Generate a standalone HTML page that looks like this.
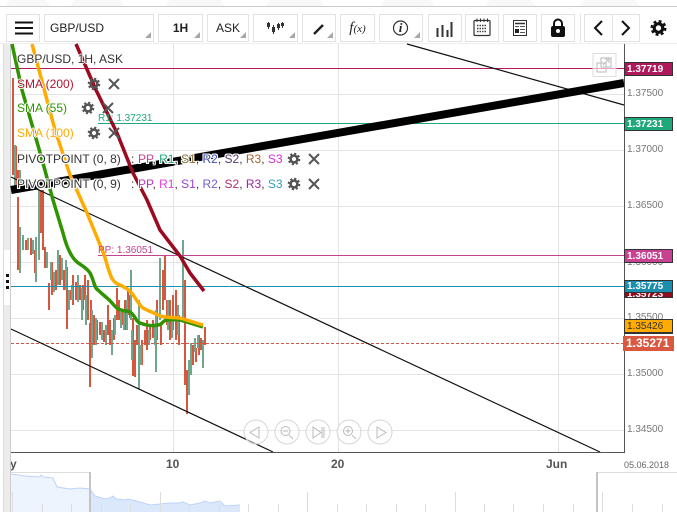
<!DOCTYPE html>
<html><head><meta charset="utf-8"><style>
html,body{margin:0;padding:0;background:#fff;width:677px;height:517px;overflow:hidden;font-family:"Liberation Sans",sans-serif}
svg{position:absolute;left:0;top:0}
.b{position:absolute;top:14px;height:26px;border:1px solid #e2e2e2;background:#fff;font-size:12px;color:#222;line-height:26px;text-align:center;box-sizing:content-box}
.c:after{content:"";position:absolute;right:2px;bottom:3px;border-left:6px solid transparent;border-bottom:6px solid #a8a8a8}
.l{position:absolute;font-size:12px;line-height:14px;white-space:nowrap;text-shadow:1px 0 0 #fff,-1px 0 0 #fff,0 1px 0 #fff,0 -1px 0 #fff}
.p{text-shadow:1px 0 0 #fff,-1px 0 0 #fff,0 1px 0 #fff,0 -1px 0 #fff,1px 1px 0 #fff,-1px -1px 0 #fff,1px -1px 0 #fff,-1px 1px 0 #fff}
.n{text-shadow:none}
.t{position:absolute;left:624px;width:49px;box-sizing:border-box;border:1px solid #333;font-size:10px;font-weight:bold;color:#fff;padding-left:2px;overflow:hidden;white-space:nowrap}
.a{position:absolute;left:627px;font-size:10px;color:#777;line-height:12px}
.x{position:absolute;font-size:12px;font-weight:bold;color:#555;line-height:14px}
</style></head><body>
<svg width="677" height="517" viewBox="0 0 677 517">
<defs>
<g id="g"><circle r="3.4" fill="none" stroke="#555" stroke-width="2.6"/><circle r="5.2" fill="none" stroke="#555" stroke-width="2.2" stroke-dasharray="2.1 1.98"/></g>
<path id="k" d="M-5 -5L5 5M5 -5L-5 5" stroke="#555" stroke-width="2" fill="none"/>
</defs>
<g fill="#f8f8f8"><path d="M10 0h35l6 6h-47zM75 0h45l5 6h-55zM170 0h50l5 6h-60zM270 0h50l5 6h-60zM385 0h45l6 6h-56zM490 0h40l6 6h-52zM585 0h50l6 6h-62z"/></g>
<rect x="0" y="6" width="677" height="1" fill="#ccc"/>
<rect x="4" y="44" width="6" height="468" fill="#ececec"/>
<rect x="4" y="250" width="6" height="55" fill="#fff"/>
<rect x="3" y="44" width="1" height="468" fill="#ddd"/>
<rect x="10" y="44" width="1" height="468" fill="#ccc"/>
<rect x="6" y="274" width="3" height="3" fill="#111"/><rect x="6" y="280" width="3" height="3" fill="#111"/><rect x="6" y="286" width="3" height="3" fill="#111"/>
<rect x="0" y="43" width="677" height="1" fill="#eee"/>
<g stroke="#e3e3e3" stroke-width="1" shape-rendering="crispEdges">
<path d="M11 94.5H624M11 150.5H624M11 206.5H624M11 262.5H624M11 318.5H624M11 374.5H624M11 430.5H624M173.5 44V452M338.5 44V452M558.5 44V452"/>
</g>
<!-- candles -->
<g fill="none" stroke-width="1.6" shape-rendering="crispEdges">
<path stroke="#d5573f" d="M13 78V175M16 146V186M18 170V186M18 197V270M26 240V250M31 238V255M35 250V273M41 190V233M43 190V250M45 247V268M49 283V310M52 262V295M56 270V290M60 255V285M64 270V290M67 267V329M70 290V300M73 275V305M76 282V300M80 285V300M83 285V310M85 275V300M88 280V320M90 323V387M91 300V340M94 315V345M97 320V340M100 322V335M104 330V342M108 305V335M110 320V345M114 318V340M117 288V320M119 300V320M122 310V325M125 300V330M128 290V315M130 295V318M133 318V376M135 340V377M137 325V345M142 340V365M145 330V345M147 320V350M150 325V340M153 320V338M157 300V340M161 325V345M163 270V310M165 255V300M167 300V325M170 300V340M173 295V330M176 290V340M179 315V345M185 280V385M187 370V414M193 345V365M196 348V362M199 335V355M201 338V350M205 327V345"/>
<path stroke="#70a68c" d="M15 145V186M20 170V186M20 227V273M23 235V250M28 238V250M33 240V254M36 237V282M39 190V260M47 252V268M51 262V280M54 272V292M58 250V285M62 258V280M66 260V290M69 290V310M72 285V300M78 275V302M82 288V320M86 295V325M92 310V358M96 318V345M102 322V340M106 325V345M112 330V355M115 315V335M121 312V328M124 310V330M127 300V330M131 270V320M132 330V360M139 300V389M141 345V365M149 330V345M155 325V345M156 310V372M160 258V320M168 300V330M172 320V338M178 305V335M183 240V320M189 360V395M191 343V375M195 338V352M198 335V348M203 340V368"/>
</g>
<!-- lines -->
<rect x="11" y="68" width="613" height="1" fill="#b5185f"/>
<rect x="98" y="123" width="526" height="1" fill="#1fa87a"/>
<rect x="98" y="255" width="526" height="1" fill="#c0448f"/>
<rect x="11" y="286" width="613" height="1" fill="#1a8faf"/>
<path d="M11 343.5H624" stroke="#d0564a" stroke-width="1" stroke-dasharray="3 2" fill="none"/>
<path d="M407 44L624 105" stroke="#111" stroke-width="1.2" fill="none"/>
<path d="M11 177L600 452" stroke="#111" stroke-width="1.2" fill="none"/>
<path d="M11 329L273 452" stroke="#111" stroke-width="1.2" fill="none"/>
<path d="M11 190L624 83" stroke="#000" stroke-width="8" fill="none"/>
<path d="M76 44L96 90L117 133L133 173L147 200L160 230L180 256L190 273L204 291" stroke="#9c0a20" stroke-width="3.5" fill="none" stroke-linejoin="round"/>
<path d="M12 44L22 90L35 135L43 163L53 200L63 233C66 245 70 256 77 262C82 266 87 268 90 273C94 280 94 288 98 290C103 295 105 296 107 298C111 301 114 306 117 308C122 312 126 310 130 312C135 315 136 322 140 323C148 326 152 326 158 325C162 325 163 320 167 320C172 319 176 320 180 320L190 323L203 327" stroke="#2f9400" stroke-width="3.5" fill="none" stroke-linejoin="round"/>
<path d="M32 44L55 130L70 175L87 213L103 252C107 262 109 275 113 280C116 284 118 284 120 285C126 288 130 290 133 295C137 300 139 305 143 308C148 311 155 313 160 316C167 318 173 317 180 318L203 325" stroke="#ffab00" stroke-width="3.5" fill="none" stroke-linejoin="round"/>
<!-- axes -->
<rect x="624" y="44" width="1" height="408" fill="#555"/>
<rect x="11" y="452" width="614" height="1" fill="#555"/>
<!-- popout -->
<rect x="593" y="53.5" width="23" height="23" fill="#fff" fill-opacity=".6" stroke="#ddd"/>
<g fill="none" stroke="#c4c4c4" stroke-width="1.2"><rect x="597" y="63" width="9" height="9"/><rect x="601" y="58" width="10" height="9"/><path d="M603 65l6-6M605 59h4v4"/></g>
<!-- zoom buttons -->
<g fill="#fff" fill-opacity=".5" stroke="#d6d6d6" stroke-width="1">
<circle cx="256" cy="432" r="12"/><circle cx="287" cy="432" r="12"/><circle cx="318" cy="432" r="12"/><circle cx="349" cy="432" r="12"/><circle cx="380" cy="432" r="12"/>
</g>
<g fill="none" stroke="#bbb" stroke-width="1">
<path d="M259 427V438L250 432.5Z"/>
<circle cx="285.500" cy="431" r="4.500"/><path d="M283 431h5M289 435l4 4"/>
<path d="M313 427V438L321 432.500ZM322 427V438M324 427V438"/>
<circle cx="348" cy="431" r="4.500"/><path d="M345.500 431h5M348 428.500v5M352 435l4 4"/>
<path d="M377 427V438L386 432.500Z"/>
</g>
<!-- minimap -->
<rect x="11" y="472" width="79" height="40" fill="#fff"/>
<path d="M11 474L25 476L40 477L41 475L44 477L53 478L57 487L70 489L80 488L90 489V512H11Z" fill="#eef4fe"/>
<path d="M90 489L95 496L105 499L110 498L113 496L116 499L125 500L128 499L140 502L150 505L160 504L170 503L180 503L183 502L190 505L200 503L205 501L210 503L220 501L225 506L240 505V512H90Z" fill="#dbe8fc"/>
<path d="M11 474L25 476L40 477L41 475L44 477L53 478L57 487L70 489L80 488L90 489L95 496L105 499L110 498L113 496L116 499L125 500L128 499L140 502L150 505L160 504L170 503L180 503L183 502L190 505L200 503L205 501L210 503L220 501L225 506L240 505" fill="none" stroke="#bcd4f8" stroke-width="1"/>
<g stroke="#ddd" stroke-width="1" shape-rendering="crispEdges">
<path d="M12.500 492V512M42.500 504V512M71.500 504V512M101.500 504V512M130.500 504V512M160.500 492V512M189.500 504V512M219.500 504V512M248.500 504V512M278.500 504V512M307.500 492V512M337.500 504V512M366.500 504V512M396.500 504V512M425.500 504V512M455.500 492V512M484.500 504V512M513.500 504V512M543.500 504V512M573.500 504V512M602.500 492V512M632.500 504V512M662.500 504V512"/>
<path d="M11 472.500H90M597 472.500H677"/>
</g>
<rect x="89" y="472" width="2" height="40" fill="#c4c4c4"/>
<rect x="596" y="472" width="2" height="40" fill="#c4c4c4"/>
</svg>

<!-- toolbar -->
<div class="b" style="left:6px;width:32px"><svg width="32" height="26" style="position:absolute;left:0;top:0"><path d="M8 7.500H26M8 13H26M8 18.500H26" stroke="#111" stroke-width="2"/></svg></div>
<div class="b c" style="left:44px;text-align:left;padding-left:5px;width:103px">GBP/USD</div>
<div class="b c" style="left:158px;width:43px;font-weight:bold">1H</div>
<div class="b c" style="left:207px;width:40px">ASK</div>
<div class="b c" style="left:253px;width:43px"><svg width="43" height="26" style="position:absolute;left:0;top:0"><path d="M14.500 7V14M19.500 10V19M24.500 8V15M28.500 7V13" stroke="#333" fill="none" stroke-width="1"/><path d="M13 8h3v4h-3zM18 12h3v5h-3zM23 9h3v4h-3zM27 8h3v3h-3z" fill="#333"/></svg></div>
<div class="b c" style="left:302px;width:32px"><svg width="32" height="26" style="position:absolute;left:0;top:0"><path d="M11 19L20 10" stroke="#222" stroke-width="2.500"/></svg></div>
<div class="b" style="left:340px;width:33px;font-family:'Liberation Serif',serif;font-style:italic;font-size:15px">f<span style="font-size:11px">(x)</span></div>
<div class="b c" style="left:379px;width:42px"><svg width="42" height="26" style="position:absolute;left:0;top:0"><circle cx="20.500" cy="13" r="7" fill="none" stroke="#333" stroke-width="1.200"/></svg><span style="position:absolute;left:0;width:41px;top:0;font-family:'Liberation Serif',serif;font-style:italic;font-weight:bold;font-size:13px">i</span></div>
<div class="b" style="left:428px;width:32px"><svg width="32" height="26" style="position:absolute;left:0;top:0"><path d="M8.500 13V22M13.500 10V22M18.500 15V22M22.500 7V22" stroke="#333" stroke-width="2"/></svg></div>
<div class="b" style="left:465px;width:32px"><svg width="32" height="26" style="position:absolute;left:0;top:0"><rect x="8" y="5.500" width="16" height="15" rx="1" fill="none" stroke="#333" stroke-width="1.200"/><path d="M11 3.500V7M14.500 3.500V7M18 3.500V7M21.500 3.500V7" stroke="#333"/><path d="M11 10.500h10M11 13.500h10M11 16.500h10" stroke="#444" stroke-width="1.500" stroke-dasharray="1.500 1"/></svg></div>
<div class="b" style="left:503px;width:32px"><svg width="32" height="26" style="position:absolute;left:0;top:0"><rect x="9.500" y="5.500" width="13" height="15" fill="none" stroke="#333"/><path d="M11 8.500h10" stroke="#333" stroke-width="1.500"/><rect x="11" y="14" width="4" height="4" fill="#222"/><path d="M16 11.500h5M16 14.500h5M16 17.500h5M11 11.500h4" stroke="#555"/></svg></div>
<div class="b" style="left:541px;width:32px"><svg width="32" height="26" style="position:absolute;left:0;top:0"><rect x="9" y="11" width="14" height="11" rx="2" fill="#111"/><path d="M12 11V8.500a4 4 0 0 1 8 0V11" fill="none" stroke="#111" stroke-width="2"/><circle cx="16" cy="16" r="2" fill="#fff"/></svg></div>
<div class="b" style="left:580px;width:0;border-right:0"></div>
<div class="b" style="left:584px;width:27px"><svg width="27" height="26" style="position:absolute;left:0;top:0"><path d="M17 6L10 13L17 20" fill="none" stroke="#111" stroke-width="2"/></svg></div>
<div class="b" style="left:612px;width:26px"><svg width="26" height="26" style="position:absolute;left:0;top:0"><path d="M9 6L16 13L9 20" fill="none" stroke="#111" stroke-width="2"/></svg></div>
<svg width="20" height="20" style="left:649px;top:18px"><g transform="translate(9.500 10)"><circle r="4.300" fill="none" stroke="#111" stroke-width="3.200"/><circle r="6.500" fill="none" stroke="#111" stroke-width="3" stroke-dasharray="2.700 2.400"/></g></svg>

<!-- legend -->
<div class="l" style="left:17px;top:52px;color:#333">GBP/USD, 1H, ASK</div>
<div class="l" style="left:17px;top:77px;color:#b0162e">SMA (200)</div>
<div class="l" style="left:17px;top:101px;color:#2f9400">SMA (55)</div>
<div class="l" style="left:17px;top:126px;color:#ffab00">SMA (100)</div>
<div class="l n" style="left:98px;top:112px;font-size:10px;color:#1fa87a">R1: 1.37231</div>
<div class="l n" style="left:98px;top:244px;font-size:10px;color:#c0448f">PP: 1.36051</div>
<div class="l p" style="left:17px;top:152px;color:#333">PIVOTPOINT (0, 8)</div>
<div class="l p" style="left:131px;top:152px;color:#333">:</div>
<div class="l p" style="left:138px;top:152px;color:#333"><span style="color:#c0448f">PP</span>, <span style="color:#1fa87a">R1</span>, <span style="color:#8a6d2b">S1</span>, <span style="color:#3a4fb0">R2</span>, <span style="color:#5a3a6a">S2</span>, <span style="color:#a8642a">R3</span>, <span style="color:#d030d0">S3</span></div>
<div class="l p" style="left:17px;top:177px;color:#333">PIVOTPOINT (0, 9)</div>
<div class="l p" style="left:131px;top:177px;color:#333">:</div>
<div class="l p" style="left:138px;top:177px;color:#333"><span style="color:#c030c0">PP</span>, <span style="color:#e040e0">R1</span>, <span style="color:#a040d0">S1</span>, <span style="color:#7060d0">R2</span>, <span style="color:#b03070">S2</span>, <span style="color:#a020b0">R3</span>, <span style="color:#30a0c0">S3</span></div>
<svg width="677" height="517" style="pointer-events:none">
<use href="#g" x="94" y="84"/><use href="#k" x="114" y="84"/>
<use href="#g" x="88" y="108"/><use href="#k" x="108" y="108"/>
<use href="#g" x="94" y="133"/><use href="#k" x="114" y="133"/>
<use href="#g" x="294" y="159"/><use href="#k" x="314" y="159"/>
<use href="#g" x="294" y="184"/><use href="#k" x="314" y="184"/>
</svg>

<!-- axis -->
<div class="a" style="top:88px">1.37500</div>
<div class="a" style="top:144px">1.37000</div>
<div class="a" style="top:200px">1.36500</div>
<div class="a" style="top:257px">1.36000</div>
<div class="a" style="top:312px">1.35500</div>
<div class="a" style="top:368px">1.35000</div>
<div class="a" style="top:424px">1.34500</div>
<div class="t" style="top:62px;height:14px;line-height:13px;background:#b0185c">1.37719</div>
<div class="t" style="top:117px;height:14px;line-height:13px;background:#1fa87a">1.37231</div>
<div class="t" style="top:249px;height:14px;line-height:13px;background:#c8408f">1.36051</div>
<div class="t" style="top:291px;height:7px;line-height:6px;background:#960a1e">1.35723</div>
<div class="t" style="top:280px;height:13px;line-height:12px;background:#1a8faf">1.35775</div>
<div class="t" style="top:319px;height:15px;background:#2f9400;padding:0"></div>
<div class="t" style="top:319px;height:14px;line-height:13px;background:#ffab00;color:#333;font-weight:normal">1.35426</div>
<div class="t" style="left:623px;width:51px;top:336px;height:15px;line-height:15px;background:#d9583f;border:0;font-size:12px;padding-left:3px">1.35271</div>

<!-- time -->
<div class="x" style="left:11px;top:457px;width:6px;overflow:hidden;text-indent:-1px">y</div>
<div class="x" style="left:166px;top:457px">10</div>
<div class="x" style="left:331px;top:457px">20</div>
<div class="x" style="left:546px;top:457px">Jun</div>
<div style="position:absolute;left:624px;top:459px;font-size:9px;line-height:12px;color:#666">05.06.2018</div>
</body></html>
